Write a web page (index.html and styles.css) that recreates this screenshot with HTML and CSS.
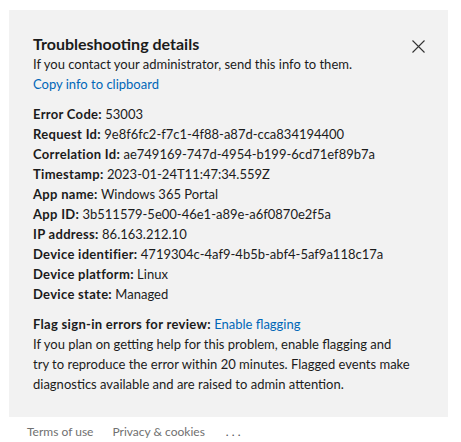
FILE: index.html
```html
<!DOCTYPE html>
<html lang="en">
<head>
<meta charset="utf-8">
<link rel="stylesheet" href="styles.css">
</head>
<body>
<div class="panel">
  <div class="head">
    <h1 class="title">Troubleshooting details</h1>
    <button class="close" aria-label="Close">
      <svg width="13" height="13" viewBox="0 0 13 13"><path d="M0.5 0.5L12.5 12.5M12.5 0.5L0.5 12.5" stroke="#333" stroke-width="1.1" fill="none"/></svg>
    </button>
  </div>
  <div class="body">
    <p class="line">If you contact your administrator, send this info to them.</p>
    <p class="line"><a class="link" href="#">Copy info to clipboard</a></p>
    <div class="details">
      <p class="line"><b>Error Code:</b> 53003</p>
      <p class="line"><b>Request Id:</b> 9e8f6fc2-f7c1-4f88-a87d-cca834194400</p>
      <p class="line"><b>Correlation Id:</b> ae749169-747d-4954-b199-6cd71ef89b7a</p>
      <p class="line"><b>Timestamp:</b> 2023-01-24T11:47:34.559Z</p>
      <p class="line"><b>App name:</b> Windows 365 Portal</p>
      <p class="line"><b>App ID:</b> 3b511579-5e00-46e1-a89e-a6f0870e2f5a</p>
      <p class="line"><b>IP address:</b> 86.163.212.10</p>
      <p class="line"><b>Device identifier:</b> 4719304c-4af9-4b5b-abf4-5af9a118c17a</p>
      <p class="line"><b>Device platform:</b> Linux</p>
      <p class="line"><b>Device state:</b> Managed</p>
    </div>
    <div class="flag">
      <p class="line"><b>Flag sign-in errors for review:</b> <a class="link" href="#">Enable flagging</a></p>
      <p class="line">If you plan on getting help for this problem, enable flagging and<br>try to reproduce the error within 20 minutes. Flagged events make<br>diagnostics available and are raised to admin attention.</p>
    </div>
  </div>
</div>
<div class="footer">
  <a class="flink" href="#">Terms of use</a>
  <a class="flink" href="#">Privacy &amp; cookies</a>
  <span class="more">. . .</span>
</div>
</body>
</html>
```
FILE: styles.css
```css
html, body {
  margin: 0;
  padding: 0;
  background: #fff;
}
body {
  font-family: Lato, "Open Sans", sans-serif;
  color: #1b1b1b;
  font-size: 13px;
}
.panel {
  box-sizing: border-box;
  width: 439px;
  margin: 10px 0 0 9px;
  padding: 24px 23px 23px 24px;
  background: #f2f2f2;
  min-height: 407px;
}
.head {
  display: flex;
  justify-content: space-between;
  align-items: flex-start;
}
.title {
  margin: 0;
  font-size: 16px;
  line-height: 20px;
  font-weight: 700;
}
.close {
  border: 0;
  background: none;
  padding: 0;
  margin: 6px 0 0 0;
  width: 13px;
  height: 13px;
  display: flex;
}
.line {
  margin: 0;
  line-height: 20px;
}
.line b {
  font-weight: 700;
  letter-spacing: 0.3px;
}
.link {
  color: #0067b8;
  text-decoration: none;
}
.details {
  margin-top: 10px;
}
.flag {
  margin-top: 10px;
}
.footer {
  display: flex;
  gap: 19px;
  padding: 7px 0 0 27px;
  font-size: 12px;
  line-height: 16px;
}
.flink {
  color: #707070;
  text-decoration: none;
}
.more {
  color: #505050;
  margin-left: 2px;
}
```
